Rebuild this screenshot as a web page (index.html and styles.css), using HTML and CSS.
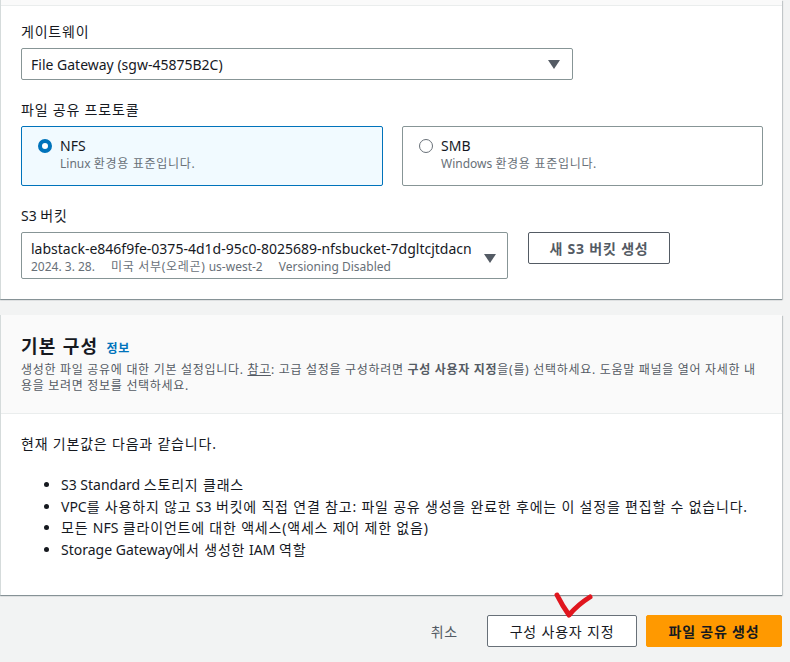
FILE: index.html
```html
<!DOCTYPE html>
<html lang="ko">
<head>
<meta charset="utf-8">
<title>파일 공유 생성</title>
<link rel="stylesheet" href="styles.css">
</head>
<body>
<div class="page">
  <section class="card">
    <div class="card-top"></div>
    <div class="card-body first">
      <div class="field">
        <div class="label ko">게이트웨이</div>
        <div class="select gw">
          <span class="select-text">File Gateway (sgw-45875B2C)</span>
          <span class="caret"></span>
        </div>
      </div>
      <div class="field">
        <div class="label ko">파일 공유 프로토콜</div>
        <div class="tiles">
          <div class="tile selected">
            <span class="radio on"></span>
            <div class="tile-text">
              <div class="tile-title">NFS</div>
              <div class="tile-desc">Linux <span class="ko">환경용 표준입니다.</span></div>
            </div>
          </div>
          <div class="tile">
            <span class="radio"></span>
            <div class="tile-text">
              <div class="tile-title">SMB</div>
              <div class="tile-desc">Windows <span class="ko">환경용 표준입니다.</span></div>
            </div>
          </div>
        </div>
      </div>
      <div class="field last">
        <div class="label">S3 <span class="ko">버킷</span></div>
        <div class="bucket-row">
          <div class="select bucket">
            <div class="bucket-text">
              <div class="bucket-name">labstack-e846f9fe-0375-4d1d-95c0-8025689-nfsbucket-7dgltcjtdacn</div>
              <div class="bucket-meta">
                <span>2024. 3. 28.</span>
                <span><span class="ko">미국 서부(오레곤)</span> us-west-2</span>
                <span>Versioning Disabled</span>
              </div>
            </div>
            <span class="caret"></span>
          </div>
          <button class="btn normal ko">새 S3 버킷 생성</button>
        </div>
      </div>
    </div>
  </section>

  <section class="card second">
    <div class="card-header">
      <h2 class="title ko">기본 구성 <a class="info">정보</a></h2>
      <p class="desc ko">생성한 파일 공유에 대한 기본 설정입니다. <u>참고</u>: 고급 설정을 구성하려면 <b>구성 사용자 지정</b>을(를) 선택하세요. 도움말 패널을 열어 자세한 내용을 보려면 정보를 선택하세요.</p>
    </div>
    <div class="card-body defaults">
      <p class="intro ko">현재 기본값은 다음과 같습니다.</p>
      <ul class="list">
        <li>S3 Standard <span class="ko">스토리지 클래스</span></li>
        <li class="ko"><span class="en">VPC</span>를 사용하지 않고 <span class="en">S3</span> 버킷에 직접 연결 참고: 파일 공유 생성을 완료한 후에는 이 설정을 편집할 수 없습니다.</li>
        <li class="ko">모든 <span class="en">NFS</span> 클라이언트에 대한 액세스(액세스 제어 제한 없음)</li>
        <li>Storage Gateway<span class="ko">에서 생성한</span> IAM <span class="ko">역할</span></li>
      </ul>
    </div>
  </section>

  <div class="actions">
    <button class="btn link ko">취소</button>
    <button class="btn normal thin ko">구성 사용자 지정</button>
    <button class="btn primary ko">파일 공유 생성</button>
  </div>

  <svg class="mark" width="46" height="34" viewBox="0 0 46 34">
    <path d="M7 7 C10 13 14 20 19 27 C25 20 32 14 40 9" fill="none" stroke="#e0161e" stroke-width="5" stroke-linecap="round" stroke-linejoin="round"/>
  </svg>
</div>
</body>
</html>
```

FILE: styles.css
```css
* { box-sizing: border-box; }
html, body { margin: 0; padding: 0; }
body {
  background: #f2f3f3;
  font-family: "Noto Sans", "Noto Sans CJK KR", sans-serif;
  font-size: 14px;
  color: #16191f;
  width: 790px;
  height: 662px;
  overflow: hidden;
}
.ko { letter-spacing: 0.8px; }
.en { letter-spacing: 0; }
.page {
  position: relative;
  padding: 0 8px 0 0;
}
.card {
  background: #fff;
  border-left: 1px solid #d5dbdb;
  box-shadow: 0 1px 1px 0 rgba(0,28,36,.35), 1px 1px 1px 0 rgba(0,28,36,.15);
}
.card-top {
  height: 6px;
  background: #fafafa;
  border-bottom: 1px solid #eaeded;
}
.card-body.first {
  padding: 15px 20px 20px;
}
.field { margin-bottom: 19px; }
.field.last { margin-bottom: 0; }
.label {
  line-height: 22px;
  margin-bottom: 5px;
}
.select {
  border: 1px solid #879596;
  border-radius: 2px;
  background: #fff;
  display: flex;
  align-items: center;
}
.select.gw {
  width: 552px;
  height: 32px;
  padding: 0 12px 0 9px;
  justify-content: space-between;
}
.caret {
  width: 0;
  height: 0;
  border-left: 6px solid transparent;
  border-right: 6px solid transparent;
  border-top: 9px solid #545b64;
  flex: none;
}
.tiles {
  display: grid;
  grid-template-columns: 362px 361px;
  gap: 19px;
}
.tile {
  display: flex;
  align-items: flex-start;
  gap: 8px;
  border: 1px solid #879596;
  border-radius: 2px;
  padding: 9px 16px 12px;
  height: 60px;
}
.tile.selected {
  background: #f1faff;
  border-color: #0073bb;
}
.radio {
  width: 14px;
  height: 14px;
  border-radius: 50%;
  border: 1.5px solid #687078;
  margin-top: 3px;
  flex: none;
  background: #fff;
}
.radio.on { border: 4.5px solid #0073bb; }
.tile-title { line-height: 20px; }
.tile-desc {
  font-size: 12px;
  line-height: 16px;
  color: #687078;
}
.tile-desc .ko, .bucket-meta .ko, .desc.ko { letter-spacing: 0.7px; }
.bucket-row {
  display: flex;
  gap: 20px;
  align-items: flex-start;
}
.select.bucket {
  width: 487px;
  height: 47px;
  padding: 6px 11px 3px 9px;
  gap: 12px;
}
.select.bucket .caret { margin-top: 2px; }
.bucket-text { flex: 1; min-width: 0; }
.bucket-name {
  line-height: 20px;
  white-space: nowrap;
  overflow: hidden;
}
.bucket-meta {
  display: flex;
  gap: 16px;
  font-size: 12px;
  line-height: 16px;
  color: #687078;
}
.btn {
  font-family: inherit;
  font-size: 14px;
  font-weight: 700;
  height: 32px;
  border-radius: 2px;
  cursor: pointer;
  padding: 0 12px;
}
.btn.normal {
  background: #fff;
  border: 1px solid #545b64;
  color: #545b64;
  width: 142px;
}
.btn.normal.thin {
  font-weight: 400;
  width: 150px;
  color: #16191f;
  border-color: #687078;
}
.btn.link {
  background: none;
  border: none;
  color: #545b64;
  font-weight: 400;
  padding: 0 20px;
}
.btn.primary {
  background: #ff9900;
  border: 1px solid #ff9900;
  color: #16191f;
  width: 136px;
}
.card.second { margin-top: 16px; }
.card-header {
  background: #fafafa;
  border-bottom: 1px solid #eaeded;
  padding: 19px 20px 19px;
}
.title {
  margin: 0 0 1px;
  font-size: 18px;
  line-height: 24px;
  font-weight: 700;
}
.title.ko { letter-spacing: 1.3px; }
.info {
  font-size: 12px;
  color: #0073bb;
  margin-left: 2px;
  font-weight: 700;
  letter-spacing: 0.8px;
}
.desc {
  margin: 0;
  font-size: 12px;
  line-height: 16px;
  color: #545b64;
}
.desc b { font-weight: 700; }
.card-body.defaults {
  padding: 19px 20px 34px;
}
.intro {
  margin: 0 0 19px;
  line-height: 22px;
}
.list {
  margin: 0;
  padding-left: 40px;
}
.list li { line-height: 21.7px; }
.actions {
  display: flex;
  justify-content: flex-end;
  align-items: center;
  gap: 9px;
  margin-top: 20px;
}
.mark {
  position: absolute;
  left: 550px;
  top: 588px;
}
```
